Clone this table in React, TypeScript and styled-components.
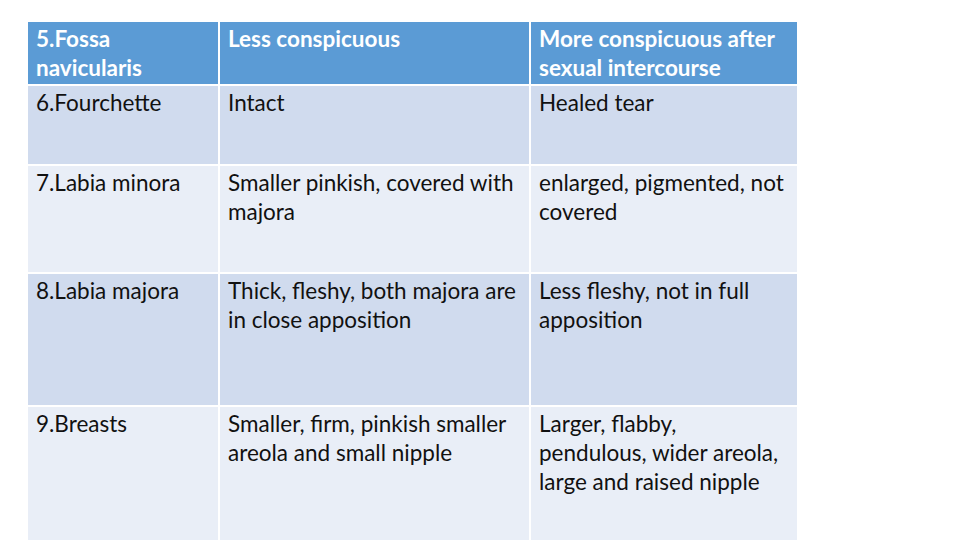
import * as React from 'react';
import styled, { createGlobalStyle } from 'styled-components';

const Global = createGlobalStyle`
  html, body {
    margin: 0;
    padding: 0;
    background: #ffffff;
    width: 960px;
    height: 540px;
    overflow: hidden;
  }
`;

const S = {
  Page: styled.div`
    width: 960px;
    height: 540px;
    padding: 22px 0 0 28px;
    box-sizing: border-box;
    font-family: Lato, 'Open Sans', sans-serif;
  `,
  Grid: styled.div`
    display: grid;
    grid-template-columns: 190px 309px 266px;
    grid-template-rows: 62px 78px 106px 131px 140px;
    gap: 2px;
    width: 769px;
  `,
  Cell: styled.div<{ $tone: 'head' | 'dark' | 'light' }>`
    padding: 2px 10px 0 8px;
    font-size: 22.5px;
    line-height: 29px;
    background: ${(p) => (p.$tone === 'head' ? '#5b9bd5' : p.$tone === 'dark' ? '#d0dbee' : '#e9eef7')};
    color: ${(p) => (p.$tone === 'head' ? '#ffffff' : '#111111')};
    font-weight: ${(p) => (p.$tone === 'head' ? 700 : 400)};
  `
};

const rows: string[][] = [
  ['5.Fossa navicularis', 'Less conspicuous', 'More conspicuous after sexual intercourse'],
  ['6.Fourchette', 'Intact', 'Healed tear'],
  ['7.Labia minora', 'Smaller pinkish, covered with majora', 'enlarged, pigmented, not covered'],
  ['8.Labia majora', 'Thick, fleshy, both majora are in close apposition', 'Less fleshy, not in full apposition'],
  ['9.Breasts', 'Smaller, firm, pinkish smaller areola and small nipple', 'Larger, flabby, pendulous, wider areola, large and raised nipple']
];

const App: React.FC = () => {
  return (
    <>
      <Global />
      <S.Page>
        <S.Grid>
          {rows.map((row, ri) =>
            row.map((text, ci) => (
              <S.Cell key={ri + '-' + ci} $tone={ri === 0 ? 'head' : ri % 2 === 1 ? 'dark' : 'light'}>
                {text}
              </S.Cell>
            ))
          )}
        </S.Grid>
      </S.Page>
    </>
  );
};

export default App;
